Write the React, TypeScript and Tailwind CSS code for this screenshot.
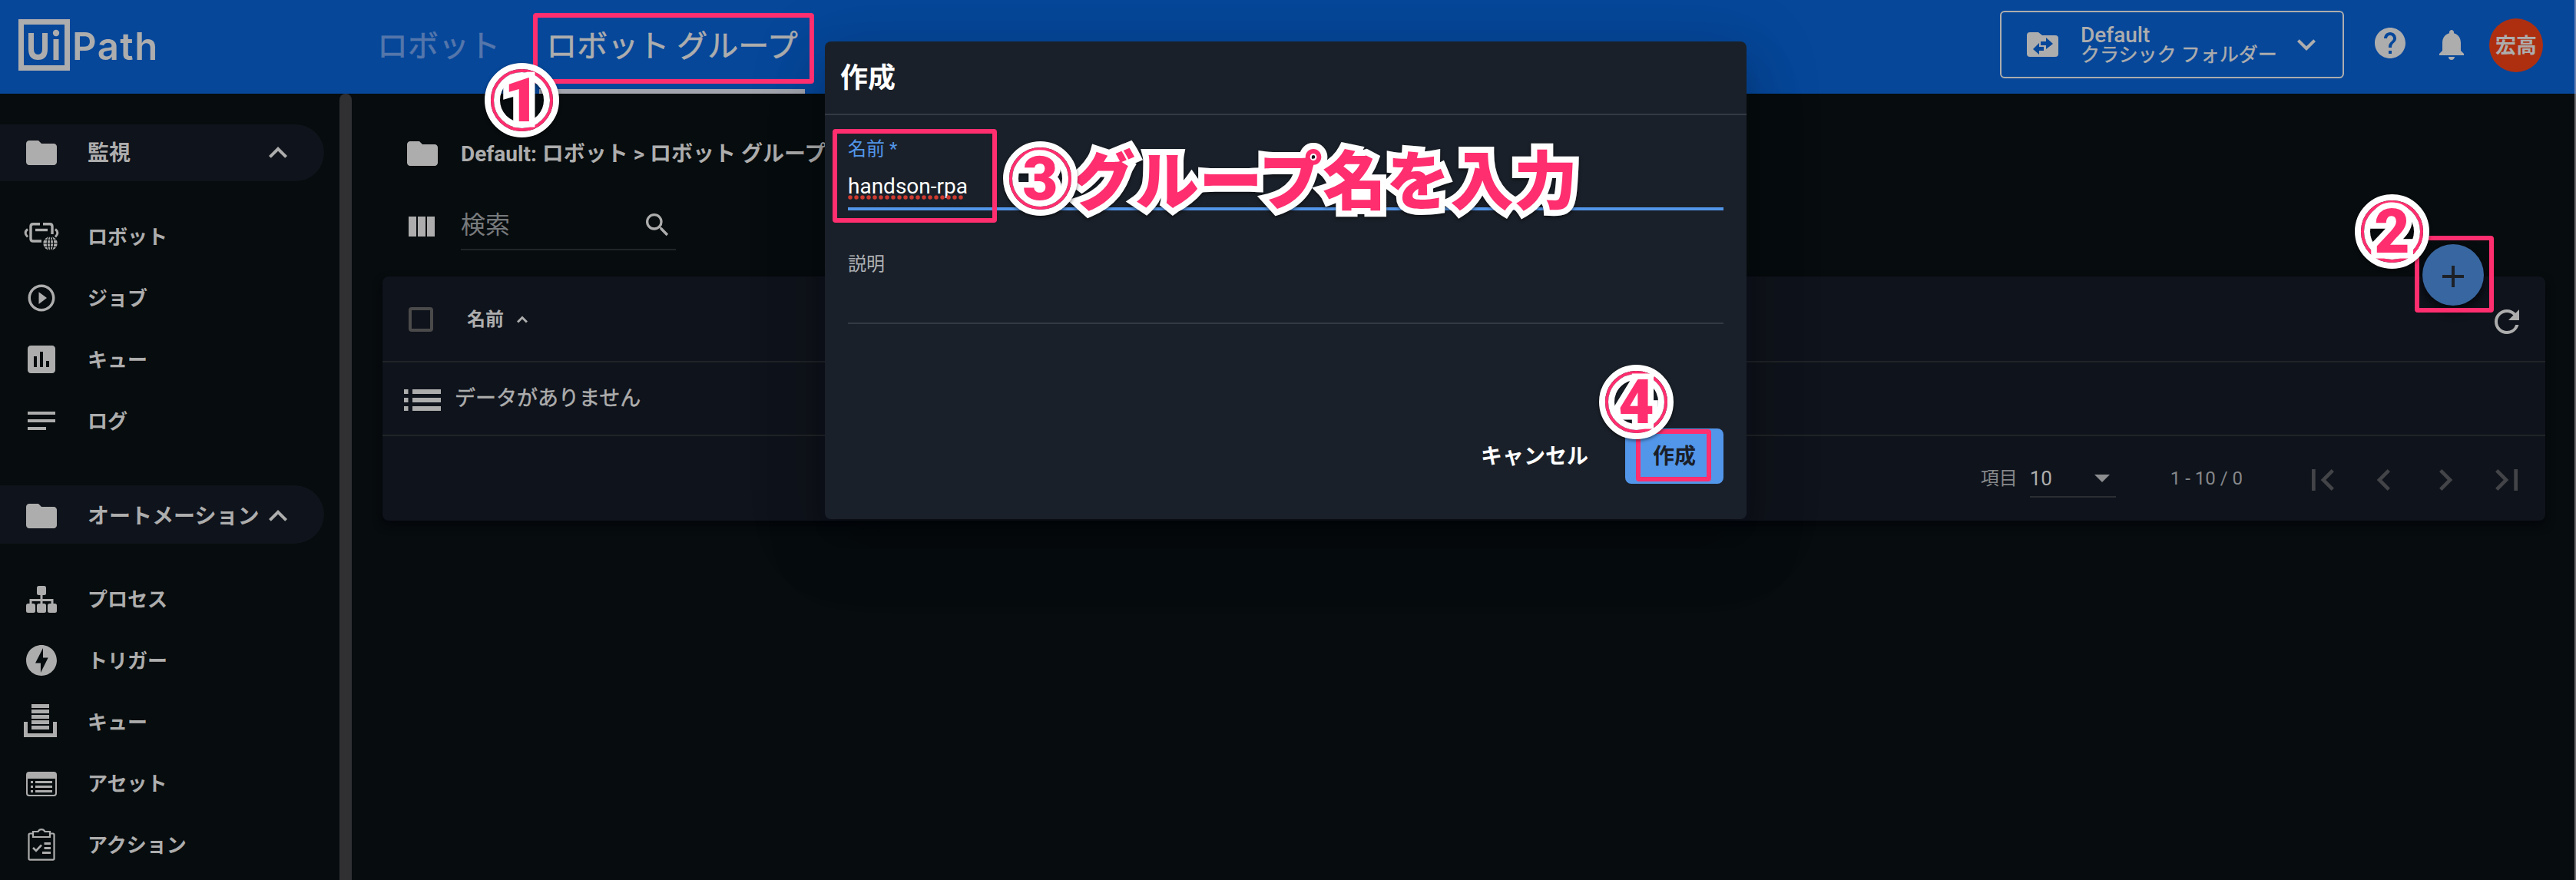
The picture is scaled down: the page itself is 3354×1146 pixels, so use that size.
import React from "react";
import {
  MdFolder, MdExpandLess, MdExpandMore, MdPlayCircleOutline, MdAssessment, MdNotes, MdHelp,
  MdNotifications, MdSearch, MdRefresh, MdAdd, MdFirstPage, MdLastPage, MdChevronLeft,
  MdChevronRight, MdOfflineBolt,
} from "react-icons/md";

const I = "#adadad";

function RobotIcon() {
  return (
    <svg className="h-9 w-[46px]" viewBox="0 0 46 36" fill="none" stroke={I} strokeWidth="3.4">
      <path d="M21 1.8H12Q9 1.8 9 5V21Q9 24 12 24H23M25 1.8H34Q37 1.8 37 5V15" />
      <path d="M15 9.5H31" />
      <path d="M5 8.5Q-.8 13 5 18.5M41 8.5Q46.8 13 41 18.5" strokeWidth="3" />
      <ellipse cx="34.5" cy="27" rx="9.2" ry="9" fill={I} stroke="none" />
      <g stroke="#070c0e" strokeWidth="1.2">
        <ellipse cx="34.5" cy="27" rx="4.2" ry="9.4" />
        <path d="M34.5 18V37M25 27H44M26.5 22.5H42.5M26.5 31.5H42.5" />
      </g>
    </svg>
  );
}

function ProcessIcon() {
  return (
    <svg className="h-[35px] w-10" viewBox="0 0 40 35" fill={I}>
      <rect x="14" width="12" height="12" rx="2.5" />
      <rect y="23" width="12" height="12" rx="2.5" />
      <rect x="14" y="23" width="12" height="12" rx="2.5" />
      <rect x="28" y="23" width="12" height="12" rx="2.5" />
      <path d="M20 10V25M6 25V18.5H34V25" fill="none" stroke={I} strokeWidth="3" />
    </svg>
  );
}

function QueueIcon() {
  return (
    <svg className="-mt-1 mr-1 h-[43px] w-[43px]" viewBox="0 0 43 43" fill={I}>
      <path d="M10 0h23v5H10zM10 7h23v5H10zM10 14h23v5H10zM10 21h23v5H10zM10 28h23v5H10z" />
      <path d="M2.500 23V40.500H40.500V23" fill="none" stroke={I} strokeWidth="5" />
    </svg>
  );
}

function AssetIcon() {
  return (
    <svg className="mt-0.5 h-8 w-10" viewBox="0 0 40 32" fill={I}>
      <rect x="1" y="1" width="38" height="30" rx="3" fill="none" stroke={I} strokeWidth="2" />
      <path d="M1 2h38v7H1z" />
      <path d="M6 12h3v3H6zM12 12h22v3H12zM6 18h3v3H6zM12 18h22v3H12zM6 24h3v3H6zM12 24h22v3H12z" />
    </svg>
  );
}

function ActionIcon() {
  return (
    <svg className="h-[42px] w-9" viewBox="0 0 36 42" fill="none" stroke={I} strokeWidth="2.2">
      <path d="M7 6.500H3Q1.500 6.500 1.500 8V39Q1.500 40.600 3 40.600H33Q34.500 40.600 34.500 39V8Q34.500 6.500 33 6.500H29" />
      <path d="M7 11V4H13.500Q15 1.200 18 1.200T22.500 4H29V11Z" />
      <path d="M7 25L11 29L18 21.500" strokeWidth="2.6" />
      <path d="M21.500 19.500H30M21.500 25.500H30M19 31.500H30" strokeWidth="2.8" />
    </svg>
  );
}

function FolderSwapIcon() {
  return (
    <svg className="h-8 w-[41px]" viewBox="0 0 41 32" fill={I}>
      <path d="M4 0H15L20 4H37Q41 4 41 8V28Q41 32 37 32H4Q0 32 0 28V4Q0 0 4 0Z" />
      <path d="M25 7L34 15L25 22V17H18V12H25ZM16 14V19H22V24H16V29L8 22Z" fill="#06479a" />
    </svg>
  );
}

function Pill({ label, className }: { label: string; className: string }) {
  return (
    <div className={"flex w-[422px] items-center rounded-r-full bg-[#0f131b] pl-[30px] " + className}>
      <MdFolder size={48} color={I} />
      <span className="ml-[36px] mt-0.5 w-[224px] whitespace-nowrap text-[28px] font-bold leading-none">{label}</span>
      <MdExpandLess size={48} color={I} />
    </div>
  );
}

function Item({ icon, label }: { icon: React.ReactNode; label: string }) {
  return (
    <div className="flex h-20 items-center">
      <div className="ml-[30px] flex w-12 justify-center">{icon}</div>
      <span className="ml-[36px] mt-0.5 text-[26px] font-bold leading-none">{label}</span>
    </div>
  );
}

function Badge({ n, className }: { n: string; className: string }) {
  return (
    <div className={"absolute size-[97px] rounded-full border-8 border-white drop-shadow-[0_2px_2px_rgba(0,0,0,0.5)] " + className}>
      <div className="size-full rounded-full border-4 border-[#ff2e6f]">
        <div className="flex size-full items-center justify-center rounded-full border-8 border-white">
          <span className="font-['Roboto'] text-[80px] font-black leading-none text-[#ff2e6f] [-webkit-text-stroke:15px_#fff] [paint-order:stroke_fill]">
            {n}
          </span>
        </div>
      </div>
    </div>
  );
}

function Frame({ className }: { className: string }) {
  return <div className={"absolute rounded-[4px] border-6 border-[#ff2e6f] " + className} />;
}

export default function App() {
  return (
    <div className="relative flex h-[1146px] w-[3354px] flex-col overflow-hidden bg-[#070c0e] font-['Roboto','Noto_Sans_CJK_JP',sans-serif] text-[#adadad]">
      <header className="flex h-[122px] shrink-0 bg-[#06479a]">
        <div className="mt-[25px] ml-6 flex h-[67px] w-[678px] items-start">
          <div className="flex h-[67px] w-[67px] border-7 border-[#adadad]">
            <svg className="size-full" viewBox="0 0 53 53" fill="none" stroke={I} strokeWidth="7">
              <path d="M9.500 11V32Q9.500 42.500 18.500 42.500T27.500 32V11" />
              <path d="M42 19V46" />
              <circle cx="42" cy="11" r="4.200" fill={I} stroke="none" />
            </svg>
          </div>
          <span className="ml-[3px] mt-[11px] font-['Inter'] text-[49px] font-semibold leading-none tracking-[1.5px]">Path</span>
          <span className="ml-auto mr-[51px] whitespace-nowrap pt-[16px] text-[40px] leading-none text-[#5576ab] [-webkit-text-stroke:0.6px_#5576ab]">ロボット</span>
        </div>
        <div className="flex h-[122px] w-[346px] justify-center border-b-6 border-[#a3a5ae] pt-[41px]">
          <span className="whitespace-nowrap text-[40px] leading-none [-webkit-text-stroke:0.6px_#adadad]">ロボット グループ</span>
        </div>
        <div className="ml-auto mr-[43px] flex h-[118px] items-center">
          <div className="-mt-0.5 flex h-[88px] w-[448px] items-center rounded-md border-2 border-[#adadad] pl-[33px]">
            <FolderSwapIcon />
            <div className="ml-[29px] flex w-[270px] flex-col whitespace-nowrap">
              <span className="text-[28px] font-medium leading-[27px]">Default</span>
              <span className="text-[25px] leading-[25px] [-webkit-text-stroke:0.5px_#adadad]">クラシック フォルダー</span>
            </div>
            <MdExpandMore size={48} color={I} />
          </div>
          <MdHelp className="-mt-1.5 ml-[36px]" size={48} color={I} />
          <MdNotifications className="-mt-0.5 ml-[32px]" size={48} color={I} />
          <div className="ml-[25px] flex size-[70px] items-center justify-center rounded-full bg-[#ae2f10] pt-0.5 text-[27px] font-bold">宏高</div>
        </div>
      </header>

      <div className="flex flex-1">
        <aside className="w-[442px] pt-10">
          <Pill label="監視" className="h-[74px]" />
          <div className="h-8" />
          <Item icon={<RobotIcon />} label="ロボット" />
          <Item icon={<MdPlayCircleOutline size={42} color={I} />} label="ジョブ" />
          <Item icon={<MdAssessment size={48} color={I} />} label="キュー" />
          <Item icon={<MdNotes size={48} color={I} />} label="ログ" />
          <div className="h-11" />
          <Pill label="オートメーション" className="h-[76px] pt-1" />
          <div className="h-8" />
          <Item icon={<ProcessIcon />} label="プロセス" />
          <Item icon={<MdOfflineBolt size={48} color={I} />} label="トリガー" />
          <Item icon={<QueueIcon />} label="キュー" />
          <Item icon={<AssetIcon />} label="アセット" />
          <Item icon={<ActionIcon />} label="アクション" />
        </aside>
        <div className="w-4 rounded-t-lg bg-[#303033]" />

        <main className="flex-1 pl-10 pr-10">
          <div className="flex h-[156px] items-center pl-7">
            <MdFolder size={48} color={I} />
            <span className="ml-[26px] mt-0.5 whitespace-nowrap text-[28px] font-bold">Default: ロボット &gt; ロボット グループ</span>
          </div>
          <div className="-mt-3.5 flex h-[62px] items-center pl-[34px]">
            <div className="flex gap-[2px]">
              <div className="h-[26px] w-2.5 bg-[#adadad]" />
              <div className="h-[26px] w-2.5 bg-[#adadad]" />
              <div className="h-[26px] w-2.5 bg-[#adadad]" />
            </div>
            <div className="ml-[34px] flex h-[62px] w-[280px] items-center justify-between border-b-2 border-[#222526] pb-0.5 pr-1">
              <span className="text-[32px] leading-none text-[#777a7c]">検索</span>
              <MdSearch size={40} color={I} />
            </div>
          </div>
          <section className="mt-[34px] h-[318px] rounded-lg bg-[#0f131b] shadow-[0_6px_12px_#04060b]">
            <div className="flex h-28 items-center border-b-2 border-[#202427] pl-[34px] pr-[26px]">
              <div className="mt-0.5 size-8 rounded-[4px] border-4 border-[#4b4a4b]" />
              <span className="ml-11 mt-0.5 text-[24px] font-bold leading-none">名前</span>
              <svg className="ml-[17px] mt-0.5 h-2.5 w-3.5" viewBox="0 0 14 10" fill="none" stroke={I} strokeWidth="3">
                <path d="M1 8.500L7 2.500L13 8.500" />
              </svg>
              <MdRefresh className="ml-auto mt-[7px]" size={48} color={I} />
            </div>
            <div className="flex h-24 items-center border-b-2 border-[#202427] pl-7">
              <svg className="mt-1 h-7 w-12" viewBox="0 0 48 28" fill={I}>
                <path d="M0 0h5.500v6H0zM11 0h37v6H11zM0 11h5.500v6H0zM11 11h37v6H11zM0 22h5.500v6H0zM11 22h37v6H11z" />
              </svg>
              <span className="ml-[18px] text-[27px] leading-none [-webkit-text-stroke:0.5px_#adadad]">データがありません</span>
            </div>
            <div className="flex h-[110px] items-center justify-end pr-[22px] text-[24px] text-[#85878a]">
              <span>項目</span>
              <div className="ml-[16px] mt-0.5 flex h-12 w-28 items-center justify-between border-b-2 border-[#2b2f33] pr-2 text-[26px] text-[#adadad]">
                10
                <svg className="h-2.5 w-5" viewBox="0 0 20 10" fill="#8c8e90"><path d="M0 0H20L10 10Z" /></svg>
              </div>
              <span className="ml-[71px] mr-[76px] whitespace-nowrap">1 - 10 / 0</span>
              <div className="mt-1 flex gap-6 text-[#434448]">
                <MdFirstPage size={56} />
                <MdChevronLeft size={56} />
                <MdChevronRight size={56} />
                <MdLastPage size={56} />
              </div>
            </div>
          </section>
        </main>
      </div>

      <div className="absolute right-0 top-0 h-full w-0.5 bg-[#6e6c6f]">
        <div className="h-[122px] bg-[#6a83b4]" />
      </div>

      <button className="absolute left-[3154px] top-[318px] flex size-20 items-center justify-center rounded-full bg-[#3866a0] pt-1 shadow-[0_6px_14px_#04060b]">
        <MdAdd size={48} color="#1d2127" />
      </button>

      <div className="absolute left-[1074px] top-[54px] h-[622px] w-[1200px] rounded-lg bg-[#1a2029] text-white shadow-[0_22px_30px_-14px_rgba(0,0,0,0.2),0_48px_76px_6px_rgba(3,2,12,0.14),0_18px_92px_16px_rgba(3,2,12,0.12)]">
        <h2 className="h-24 border-b-2 border-[#333a44] pl-5 pt-[30px] text-[36px] font-bold leading-none">作成</h2>
        <div className="px-[30px]">
          <div className="flex h-[124px] flex-col border-b-4 border-[#5296ea] pt-8">
            <span className="text-[24px] leading-none text-[#5296ea]">名前 *</span>
            <span className="mt-[21px] whitespace-nowrap text-[28px] leading-[32px]">handson-rpa</span>
            <svg className="-mt-[5px] h-1.5 w-[152px] shrink-0" viewBox="0 0 152 6">
              <line x1="3" y1="3" x2="150" y2="3" stroke="#cf3a30" strokeWidth="5.500" strokeLinecap="round" strokeDasharray="0 8" />
            </svg>
          </div>
          <div className="h-[148px] border-b-2 border-[#333a44] pt-[58px] text-[24px] leading-none text-[#adb0b4]">説明</div>
          <div className="mt-[136px] flex items-center justify-end text-[28px] font-bold">
            <span className="mr-12 mt-0.5">キャンセル</span>
            <span className="flex h-[72px] w-32 items-center justify-center rounded-lg bg-[#5296ea] pt-0.5 text-[#1a1f29]">作成</span>
          </div>
        </div>
      </div>

      <Frame className="left-[694px] top-[17px] h-[92px] w-[366px]" />
      <Frame className="left-[3144px] top-[307px] h-[100px] w-[103px]" />
      <Frame className="left-[1084px] top-[168px] h-[122px] w-[214px]" />
      <Frame className="left-[2130px] top-[559px] h-[68px] w-[98px]" />
      <Badge n="1" className="left-[631px] top-[82px]" />
      <Badge n="2" className="left-[3066px] top-[253px]" />
      <div className="absolute left-[1395px] top-[188px] whitespace-nowrap font-['Noto_Sans_CJK_JP'] text-[83px] font-black leading-[84px] text-[#ff2e6f] drop-shadow-[0_2px_2px_rgba(0,0,0,0.5)] [-webkit-text-stroke:16px_#fff] [paint-order:stroke_fill] [stroke-linejoin:round]">
        グループ名を入力
      </div>
      <Badge n="3" className="left-[1306px] top-[184px]" />
      <Badge n="4" className="left-[2082px] top-[475px]" />
    </div>
  );
}
